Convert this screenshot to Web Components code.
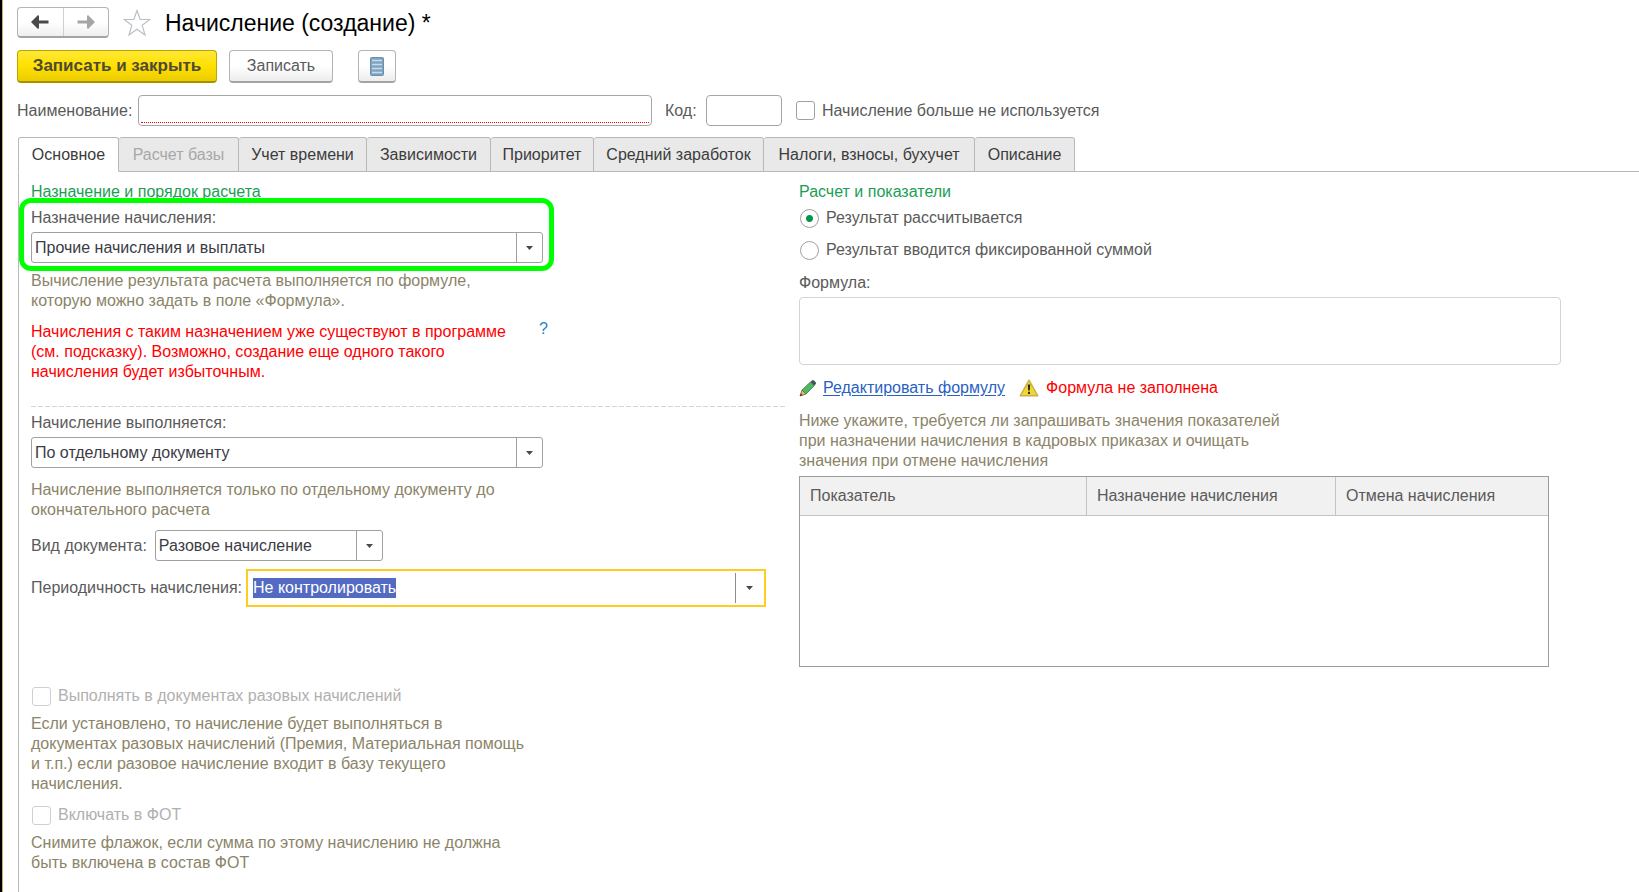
<!DOCTYPE html>
<html lang="ru">
<head>
<meta charset="utf-8">
<title>Начисление (создание)</title>
<style>
  body {
    margin: 0;
    background: #fff;
    color: #5a5a5a;
    font: 16px/20px "Liberation Sans", Arial, sans-serif;
  }
</style>
</head>
<body>
<accrual-page></accrual-page>

<script>
const base = `
  *, *::before, *::after { box-sizing: border-box; }
  button, input, select, textarea { font: inherit; color: inherit; margin: 0; }
  svg { display: block; flex: none; }
`;

function define(name, css, html, setup) {
  customElements.define(name, class extends HTMLElement {
    connectedCallback() {
      if (this.shadowRoot) return;
      const root = this.attachShadow({ mode: 'open' });
      root.innerHTML = `<style>${base}${css}</style>` + (typeof html === 'function' ? html(this) : html);
      if (setup) setup(this, root);
    }
  });
}

/* Back / forward buttons */
define('nav-buttons', `
  :host { display: flex; height: 31px; width: 92px; border: 1px solid #b4b4b4; border-bottom: 2px solid #a4a4a4;
          border-radius: 4px; background: linear-gradient(#fff 50%, #efefef); }
  button { flex: 1; display: grid; place-items: center; padding: 0; border: 0; background: none; color: #4a4a4a; }
  button + button { border-left: 1px solid #d0d0d0; color: #a5a5a5; }
`, `
  <button type="button" aria-label="Назад"><svg width="18" height="14" viewBox="0 0 18 14"><path d="M0 7 7 0 8 1v4.500H17.500v3H8V13L7 14z" fill="currentColor"/></svg></button>
  <button type="button" aria-label="Вперед" disabled><svg width="18" height="14" viewBox="0 0 18 14"><path d="M18 7 11 0 10 1v4.500H.5v3H10V13L11 14z" fill="currentColor"/></svg></button>
`);

/* Command bar button: plain or primary */
define('command-button', `
  :host { display: block; }
  button { display: grid; place-items: center; height: 33px; width: 104px; padding: 0 10px; white-space: nowrap; border: 1px solid #b4b4b4;
           border-bottom: 2px solid #a4a4a4; border-radius: 4px; background: linear-gradient(#fff 50%, #ededed); }
  :host([primary]) button { width: 200px; font-size: 17px; font-weight: bold; color: #4d4a35; border-color: #bda500; border-bottom-color: #a89000;
           background: linear-gradient(#ffe836, #ffe000 50%, #ebcc00); }
  :host([icon]) button { width: 38px; padding: 0; }
`, el => `<button type="button" ${el.title ? `aria-label="${el.title}"` : ''}><slot></slot></button>`);

/* Plain text field with an inline label */
define('text-field', `
  :host { display: flex; align-items: center; gap: 6px; min-width: 0; }
  label { white-space: nowrap; }
  .box { flex: 1; min-width: 0; height: 31px; padding: 2px; border: 1px solid #a6a6a6; border-radius: 4px; background: #fff; }
  input { display: block; width: 100%; height: 25px; border: 0; outline: 0; padding: 0 2px; background: none; }
  :host([required]) input { border-bottom: 1px dotted #f00; }
`, el => `
  <label for="f">${el.getAttribute('label')}</label>
  <div class="box"><input id="f" type="text"></div>
`);

define('check-field', `
  :host { display: block; }
  label { display: flex; align-items: center; gap: 7px; height: 20px; white-space: nowrap; }
  input { appearance: none; width: 19px; height: 19px; border: 1px solid #a0a0a0; border-radius: 3px; background: #fff; }
  :host([disabled]) { padding-left: 1px; color: #b0b0b0; }
  :host([disabled]) input { border-color: #cfcfcf; }
`, el => `<label><input type="checkbox" ${el.hasAttribute('disabled') ? 'disabled' : ''}><slot></slot></label>`);

/* Drop-down list; "stacked" puts the label above the field */
const arrow = '<svg width="7" height="4" viewBox="0 0 7 4"><path d="M0 0h7L3.500 4z" fill="#4a4a4a"/></svg>';
define('select-field', `
  :host { display: flex; align-items: center; gap: 8px; }
  :host([stacked]) { flex-direction: column; align-items: stretch; gap: 4px; width: 512px; max-width: 100%; }
  label { white-space: nowrap; }
  .box { display: grid; grid-template-columns: minmax(0, 1fr) 26px; height: 31px; border: 1px solid #a0a0a0; border-radius: 3px; background: #fff; color: #3c3c46; }
  :host(:not([stacked])) .box { width: 228px; }
  select { grid-area: 1 / 1 / 2 / 3; appearance: none; width: 100%; padding: 0 30px 0 3px; border: 0; outline: 0; background: none; }
  .mark { grid-area: 1 / 2; display: grid; place-items: center; border-left: 1px solid #a0a0a0; pointer-events: none; }
`, el => `
  <label for="s">${el.getAttribute('label')}</label>
  <div class="box"><select id="s"><option>${el.getAttribute('value')}</option></select><span class="mark">${arrow}</span></div>
`);

/* Editable list in its active state: the whole value is selected */
define('combo-field', `
  :host { display: flex; align-items: center; gap: 4px; }
  label { white-space: nowrap; }
  .box { flex: 1; max-width: 520px; display: flex; align-items: center; height: 38px; padding: 0 2px 0 5px; border: 2px solid #fc2; background: #fff; }
  input { flex: 1; min-width: 0; height: 20px; padding: 0; border: 0; outline: 0; color: #3c3c46; }
  input::selection { background: #536ac2; color: #fff; }
  button { width: 27px; height: 30px; display: grid; place-items: center; padding: 0; border: 0; border-left: 1px solid #8c8c8c; background: none; }
`, el => `
  <label for="c">${el.getAttribute('label')}</label>
  <div class="box"><input id="c" type="text" value="${el.getAttribute('value')}"><button type="button" aria-label="Выбрать">${arrow}</button></div>
`, (el, root) => { const i = root.querySelector('input'); i.focus(); i.select(); });

define('section-title', `
  :host { display: block; }
  h2 { margin: 0; font: inherit; color: #1a9e55; }
`, '<h2><slot></slot></h2>');

define('hint-text', `
  :host { display: block; max-width: 500px; color: #8b8468; }
  :host([warning]) { color: #f00; }
  p { margin: 0; }
`, '<p><slot></slot></p>');

define('tab-strip', `
  :host { display: flex; height: 35px; color: #3c3c3c; }
  button { flex: 0 1 var(--w); min-width: 0; padding: 0; white-space: nowrap; border: 1px solid #b8b8b8; border-left: 0;
           border-radius: 3px 3px 0 0; background: #e9e9e9; }
  button[aria-selected=true] { border-left: 1px solid #b8b8b8; border-bottom-color: #fff; background: #fff; }
  button:disabled { color: #a8a8a8; }
  .rest { flex: 1; border-bottom: 1px solid #b8b8b8; }
`, `
  <button type="button" role="tab" aria-selected="true" style="--w:101px">Основное</button>
  <button type="button" role="tab" disabled style="--w:120px">Расчет базы</button>
  <button type="button" role="tab" style="--w:128px">Учет времени</button>
  <button type="button" role="tab" style="--w:124px">Зависимости</button>
  <button type="button" role="tab" style="--w:103px">Приоритет</button>
  <button type="button" role="tab" style="--w:170px">Средний заработок</button>
  <button type="button" role="tab" style="--w:211px">Налоги, взносы, бухучет</button>
  <button type="button" role="tab" style="--w:100px">Описание</button>
  <span class="rest"></span>
`);

define('result-mode', `
  :host { display: grid; gap: 12px; }
  label { display: flex; align-items: center; gap: 7px; height: 20px; padding-left: 1px; }
  input { appearance: none; width: 19px; height: 19px; border: 1px solid #a0a0a0; border-radius: 50%; background: #fff; }
  input:checked { background: radial-gradient(circle, #009646 3px, #fff 4px); }
`, `
  <label><input type="radio" name="mode" checked>Результат рассчитывается</label>
  <label><input type="radio" name="mode">Результат вводится фиксированной суммой</label>
`);

define('formula-editor', `
  :host { display: block; }
  label { display: block; }
  textarea { display: block; width: 100%; height: 68px; margin-top: 4px; border: 1px solid #d4d4d4; border-radius: 4px; outline: 0; resize: none; background: #fff; }
  .actions { display: flex; align-items: center; margin-top: 13px; height: 20px; }
  a { margin: 0 14px 0 6px; color: #2a5fc4; text-underline-offset: 2px; }
  .empty { margin-left: 7px; color: #f00; }
`, `
  <label for="t">Формула:</label>
  <textarea id="t"></textarea>
  <div class="actions">
    <svg width="18" height="18" viewBox="0 0 18 18">
      <path d="M1 17 3 11 7 15z" fill="#e9b566" stroke="#7d5c34" stroke-width=".8"/>
      <path d="M1 17 1.800 14.400 3.600 16.200z" fill="#333"/>
      <path d="M3 11 11.500 3 15.200 6.800 7 15z" fill="#4fb960" stroke="#3c7d49" stroke-width=".8"/>
      <path d="M11.500 3 13.200 1.300Q14 .6 14.900 1.400L16.700 3.200Q17.400 4 16.800 5L15.200 6.800z" fill="#46525e"/>
    </svg>
    <a href="#formula">Редактировать формулу</a>
    <svg width="20" height="18" viewBox="0 0 20 18">
      <path d="M10 1.200 18.800 16.800H1.200z" fill="#f0d632" stroke="#c9b04a" stroke-width="1.400" stroke-linejoin="round"/>
      <path d="M8.800 5.500h2.400L10.800 11.500H9.200zM9 12.800h2v2.200H9z" fill="#2c2c20"/>
    </svg>
    <span class="empty">Формула не заполнена</span>
  </div>
`);

define('indicator-table', `
  :host { display: block; height: 191px; border: 1px solid #9c9c9c; background: #fff; }
  table { width: 100%; border-collapse: separate; border-spacing: 0; table-layout: fixed; }
  th { height: 39px; padding: 0 10px; text-align: left; font-weight: normal; white-space: nowrap; background: #f1f1f1; border-bottom: 1px solid #c4c4c4; }
  th + th { border-left: 1px solid #c4c4c4; }
  th:nth-child(1) { width: 286px; }
  th:nth-child(2) { width: 249px; }
`, `
  <table><thead><tr><th scope="col">Показатель</th><th scope="col">Назначение начисления</th><th scope="col">Отмена начисления</th></tr></thead><tbody></tbody></table>
`);

define('main-panel', `
  :host { display: grid; grid-template-columns: minmax(0, 755fr) minmax(0, 840fr); gap: 13px; padding: 10px 0 16px 12px; border-left: 1px solid #b8b8b8; }
  .marked { position: relative; margin: 6px 0 8px; }
  .frame { position: absolute; inset: -10px auto -8px -12px; width: 535px; border: 5px solid #0f0; border-radius: 12px; pointer-events: none; }
  .warn { display: flex; margin-top: 11px; }
  .warn hint-text { flex: 0 1 500px; }
  .help { margin: -3px 0 0 8px; padding: 0; height: 20px; border: 0; background: none; color: #1b84c4; line-height: 20px; }
  hr { margin: 24px 0 6px; height: 1px; border: 0; background: repeating-linear-gradient(90deg, #d4d4d4 0 5px, transparent 5px 7px); }
  .after { margin-top: 12px; }
  .doc { margin-top: 10px; }
  .period { margin-top: 8px; }
  .once { margin-top: 79px; }
  .fot { margin-top: 11px; }
  .under { margin-top: 8px; }
  .right { padding-right: 78px; }
  result-mode { margin: 6px 0 13px; }
  .ask { margin: 13px 0 5px; }
  indicator-table { margin-right: 12px; }
`, `
  <div>
    <section-title>Назначение и порядок расчета</section-title>
    <div class="marked">
      <select-field stacked label="Назначение начисления:" value="Прочие начисления и выплаты"></select-field>
      <div class="frame"></div>
    </div>
    <hint-text>Вычисление результата расчета выполняется по формуле, которую можно задать в поле «Формула».</hint-text>
    <div class="warn">
      <hint-text warning>Начисления с таким назначением уже существуют в программе (см. подсказку). Возможно, создание еще одного такого начисления будет избыточным.</hint-text>
      <button class="help" type="button">?</button>
    </div>
    <hr>
    <select-field stacked label="Начисление выполняется:" value="По отдельному документу"></select-field>
    <hint-text class="after">Начисление выполняется только по отдельному документу до окончательного расчета</hint-text>
    <select-field class="doc" label="Вид документа:" value="Разовое начисление"></select-field>
    <combo-field class="period" label="Периодичность начисления:" value="Не контролировать"></combo-field>
    <check-field class="once" disabled>Выполнять в документах разовых начислений</check-field>
    <hint-text class="under">Если установлено, то начисление будет выполняться в документах разовых начислений (Премия, Материальная помощь и т.п.) если разовое начисление входит в базу текущего начисления.</hint-text>
    <check-field class="fot" disabled>Включать в ФОТ</check-field>
    <hint-text class="under">Снимите флажок, если сумма по этому начислению не должна быть включена в состав ФОТ</hint-text>
  </div>
  <div class="right">
    <section-title>Расчет и показатели</section-title>
    <result-mode></result-mode>
    <formula-editor></formula-editor>
    <hint-text class="ask">Ниже укажите, требуется ли запрашивать значения показателей при назначении начисления в кадровых приказах и очищать значения при отмене начисления</hint-text>
    <indicator-table></indicator-table>
  </div>
`);

define('accrual-page', `
  :host { display: flex; flex-direction: column; box-sizing: border-box; min-height: 100vh; padding: 7px 0 0 15px; border-left: 2px solid #000; box-shadow: inset 1px 0 #c9ad6a; }
  header, .commands, .fields { display: flex; align-items: center; }
  .star { margin: 0 14px; }
  h1 { margin: 0; font-size: 23px; line-height: 30px; font-weight: normal; color: #000; }
  .commands { margin-top: 12px; }
  .commands command-button:nth-child(2) { margin: 0 25px 0 12px; }
  .fields { margin: 12px 0 11px; }
  .name { flex: 0 1 635px; }
  .code { flex: 0 0 117px; margin: 0 14px 0 13px; gap: 9px; }
  tab-strip, main-panel { margin-left: 1px; }
  main-panel { flex: 1; }
`, `
  <header>
    <nav-buttons></nav-buttons>
    <svg class="star" width="28" height="28" viewBox="0 0 28 28"><path d="M14 1.500 17.200 10.500H26.800L19.200 16.300 22 26 14 20.200 6 26 8.800 16.300 1.200 10.500H10.800z" fill="#fff" stroke="#b9bfc8" stroke-width="1.200"/></svg>
    <h1>Начисление (создание) *</h1>
  </header>
  <div class="commands">
    <command-button primary>Записать и закрыть</command-button>
    <command-button>Записать</command-button>
    <command-button icon title="Список">
      <svg width="14" height="19" viewBox="0 0 14 19"><rect x=".5" y=".5" width="13" height="18" rx="1" fill="#7fa3c2" stroke="#6b8fae"/><path d="M2 3.500h10M2 7.500h10M2 11.500h10M2 15.500h10" stroke="#c9dcec" stroke-width="1.600"/></svg>
    </command-button>
  </div>
  <div class="fields">
    <text-field class="name" required label="Наименование:"></text-field>
    <text-field class="code" label="Код:"></text-field>
    <check-field>Начисление больше не используется</check-field>
  </div>
  <tab-strip role="tablist"></tab-strip>
  <main-panel></main-panel>
`);
</script>
</body>
</html>
